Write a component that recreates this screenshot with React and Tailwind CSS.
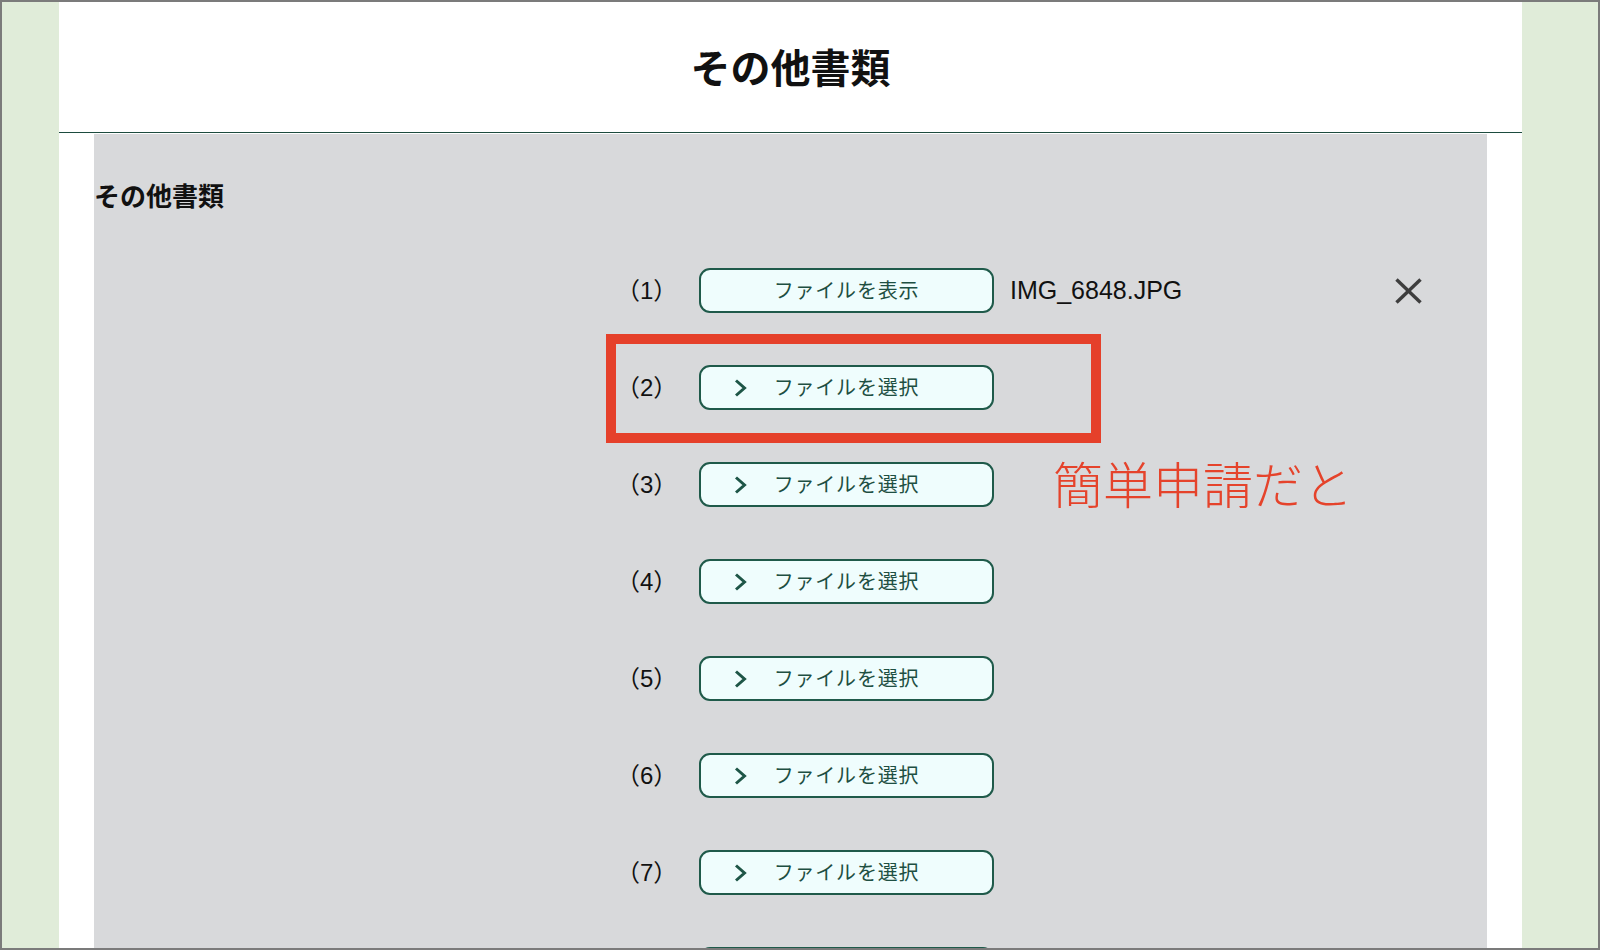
import React from "react";

const jp = { fontFamily: '"Liberation Sans", "Noto Sans CJK JP", sans-serif' };

function Chevron() {
  return (
    <svg width="13" height="19" viewBox="0 0 13 19" className="absolute left-[33px] top-1/2 -translate-y-1/2">
      <polyline points="2,2 10.5,9.5 2,17" fill="none" stroke="#1e5647" strokeWidth="3" strokeLinejoin="miter" />
    </svg>
  );
}

function FileButton({ label, withChevron }) {
  return (
    <button className="relative flex h-[45px] w-[295px] items-center justify-center rounded-[11px] border-2 border-[#1f5a4a] bg-[#effdfd] text-[20px] tracking-[0.04em] text-[#1e4f42]">
      {withChevron && <Chevron />}
      {label}
    </button>
  );
}

function FileRow({ num, file }) {
  return (
    <div className="flex h-[45px] items-center pl-[522px] pr-[65px]">
      <span className="w-[83px] text-[24px] text-[#111]">（{num}）</span>
      {file ? (
        <>
          <FileButton label="ファイルを表示" />
          <span className="ml-[16px] flex-1 text-[25px] text-[#111]">{file}</span>
          {/* remove */}
          <svg width="27" height="26" viewBox="0 0 27 26">
            <line x1="1.5" y1="1.5" x2="25.5" y2="24.5" stroke="#3e3e3e" strokeWidth="3.4" />
            <line x1="25.5" y1="1.5" x2="1.5" y2="24.5" stroke="#3e3e3e" strokeWidth="3.4" />
          </svg>
        </>
      ) : (
        <FileButton label="ファイルを選択" withChevron />
      )}
    </div>
  );
}

export default function App() {
  const rows = [1, 2, 3, 4, 5, 6, 7, 8];

  return (
    <div
      className="relative flex h-[950px] w-[1600px] overflow-hidden border-2 border-[#7b7b7b] bg-[#e0ecd9]"
      style={jp}
    >
      <div className="w-[57px] shrink-0" />

      <main className="flex w-[1463px] shrink-0 flex-col bg-white">
        <header className="flex h-[131px] shrink-0 items-center justify-center border-b-[1.5px] border-[#1d4c3f] pt-[4px]">
          <h1 className="text-[40px] font-bold text-[#111]">その他書類</h1>
        </header>

        <section className="mx-[35px] mt-px flex-1 bg-[#d8d9db] pt-[48px]">
          <h2 className="text-[26px] font-bold leading-[31px] text-[#111]">その他書類</h2>

          <div className="mt-[55px] flex flex-col gap-[52px]">
            {rows.map((n) => (
              <FileRow key={n} num={n} file={n === 1 ? "IMG_6848.JPG" : null} />
            ))}
          </div>
        </section>
      </main>

      <div className="flex-1" />

      {/* annotation overlay */}
      <div className="absolute left-[604px] top-[332px] h-[109px] w-[495px] border-[10px] border-[#e5402a]" />
      <div className="absolute left-[1051px] top-[460px] text-[50px] font-light leading-none text-[#e5432b]">
        簡単申請だと
      </div>
    </div>
  );
}
